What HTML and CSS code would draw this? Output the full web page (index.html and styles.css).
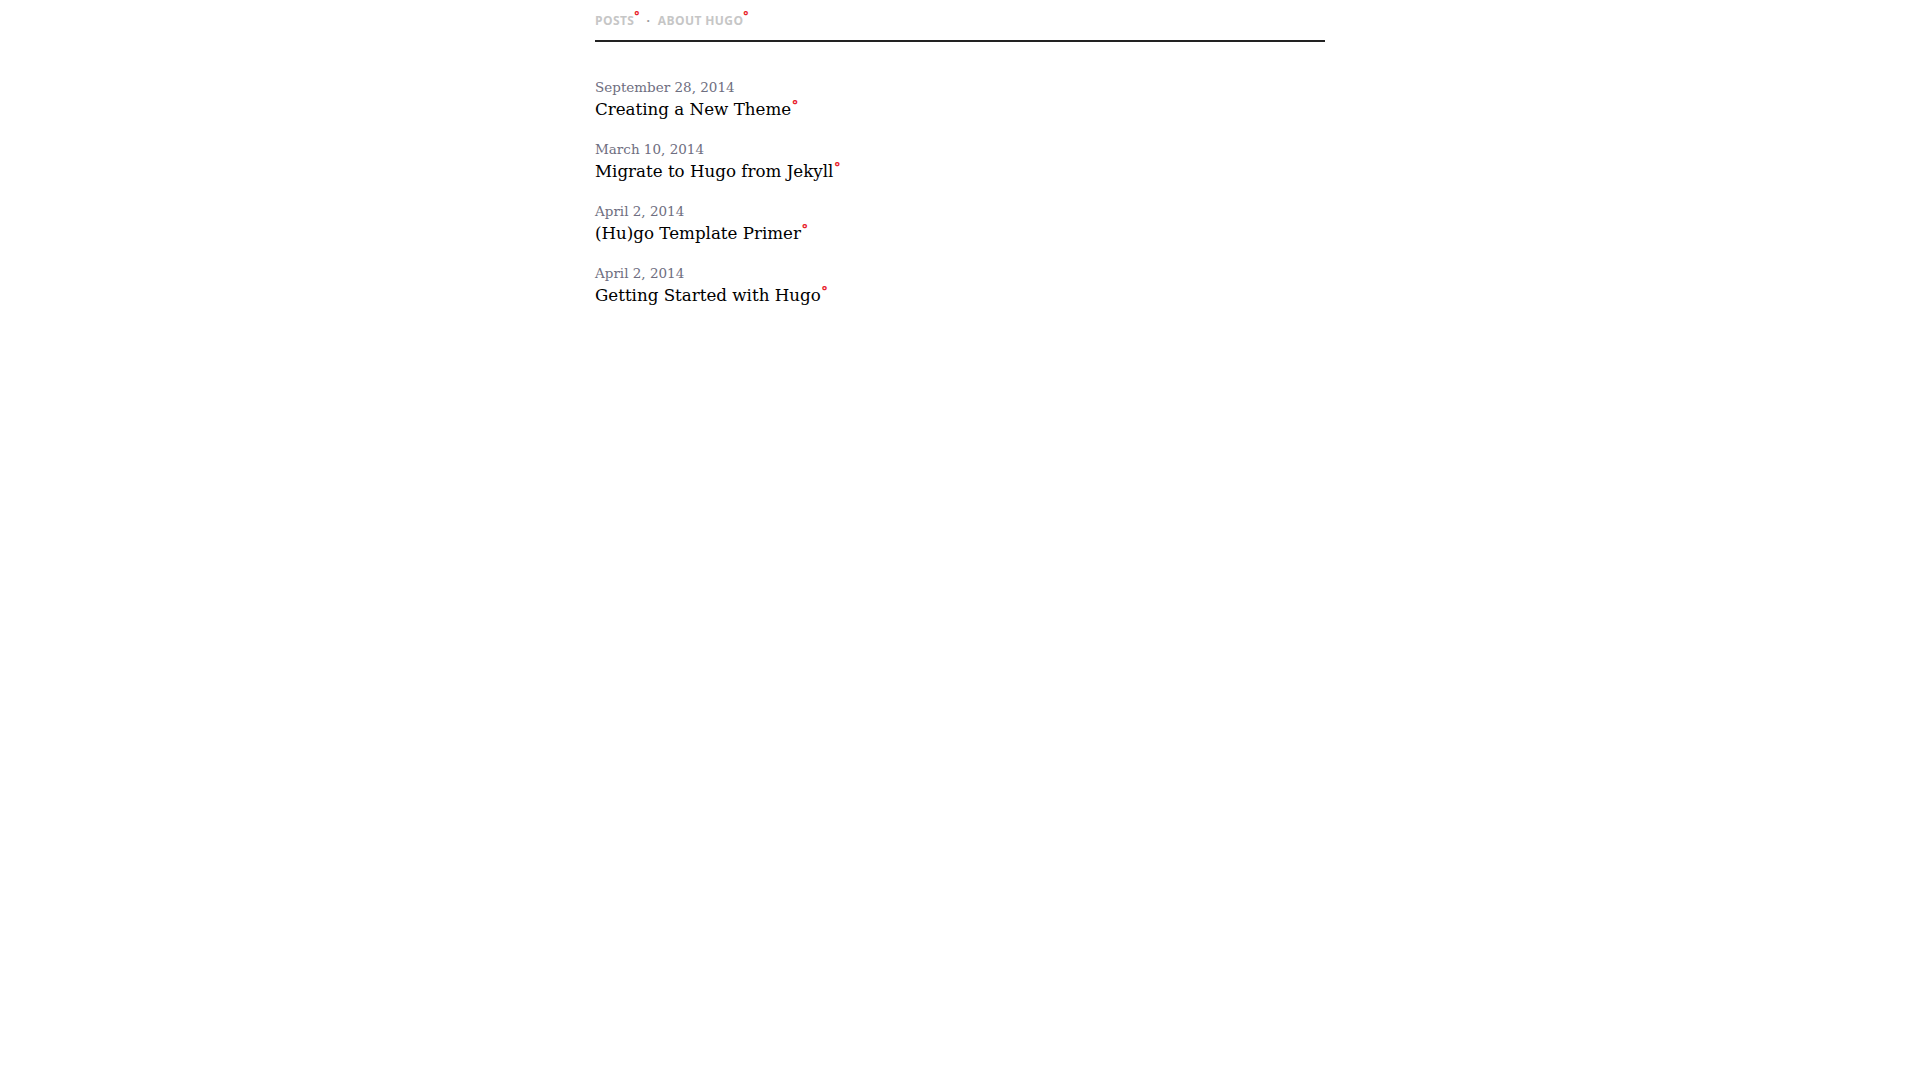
FILE: index.html
```html
<!DOCTYPE html>
<html lang="en">
<head>
<meta charset="utf-8">
<title>Hugo</title>
<link rel="stylesheet" href="styles.css">
</head>
<body>
<div class="page">
  <header class="site-header">
    <nav class="nav">
      <a class="nav-link" href="#">Posts</a>
      <span class="nav-sep">·</span>
      <a class="nav-link" href="#">About Hugo</a>
    </nav>
  </header>
  <main class="content">
    <ul class="post-list">
      <li class="post">
        <time class="post-date">September 28, 2014</time>
        <a class="post-title" href="#">Creating a New Theme</a>
      </li>
      <li class="post">
        <time class="post-date">March 10, 2014</time>
        <a class="post-title" href="#">Migrate to Hugo from Jekyll</a>
      </li>
      <li class="post">
        <time class="post-date">April 2, 2014</time>
        <a class="post-title" href="#">(Hu)go Template Primer</a>
      </li>
      <li class="post">
        <time class="post-date">April 2, 2014</time>
        <a class="post-title" href="#">Getting Started with Hugo</a>
      </li>
    </ul>
  </main>
</div>
</body>
</html>
```

FILE: styles.css
```css
html, body {
  margin: 0;
  padding: 0;
  background: #ffffff;
}

body {
  font-family: "DejaVu Serif", "Liberation Serif", serif;
  color: #111111;
}

.page {
  width: 730px;
  margin: 0 auto;
}

.site-header {
  border-bottom: 2px solid #222222;
}

.nav {
  display: flex;
  align-items: center;
  padding: 13px 0 11px;
  font-family: "Open Sans", "Liberation Sans", sans-serif;
  font-weight: 700;
  font-size: 12px;
  line-height: 16px;
  letter-spacing: 0.4px;
  text-transform: uppercase;
}

.nav-link {
  color: #c6c6c6;
  text-decoration: none;
}

.nav-link::after,
.post-title::after {
  content: "°";
  font-family: "Open Sans", "Liberation Sans", sans-serif;
  color: #e8202a;
  font-weight: 700;
  vertical-align: top;
  line-height: 1;
  letter-spacing: 0;
}

.nav-link::after {
  font-size: 12px;
  position: relative;
  top: -3px;
}

.nav-sep {
  color: #9a9a9a;
  margin: 0 8px 0 7px;
  letter-spacing: 0;
}

.content {
  padding-top: 35px;
}

.post-list {
  list-style: none;
  margin: 0;
  padding: 0;
  display: flex;
  flex-direction: column;
  gap: 18px;
}

.post {
  display: flex;
  flex-direction: column;
  align-items: flex-start;
}

.post-date {
  font-size: 13.5px;
  line-height: 20px;
  color: #6e6e80;
}

.post-title {
  font-size: 16.7px;
  line-height: 24px;
  color: #000000;
  text-decoration: none;
}

.post-title::after {
  font-size: 13px;
  position: relative;
  top: 1px;
  margin-left: 1px;
}
```
